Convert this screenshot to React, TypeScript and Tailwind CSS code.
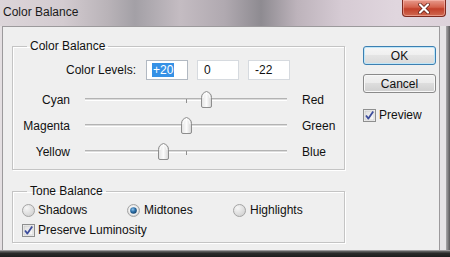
import React from "react";

function Thumb({ left }: { left: number }) {
  return (
    <svg
      className="absolute top-[4px]"
      style={{ left: left - 5.5 }}
      width="11"
      height="17"
      viewBox="0 0 11 17"
    >
      <defs>
        <linearGradient id="tg" x1="0" y1="0" x2="1" y2="0">
          <stop offset="0" stopColor="#e2e2e2" />
          <stop offset="0.5" stopColor="#fbfbfb" />
          <stop offset="1" stopColor="#d4d4d4" />
        </linearGradient>
      </defs>
      <path
        d="M0.5 6.5 Q0.5 2 5.5 0.5 Q10.5 2 10.5 6.5 L10.5 15 Q10.5 16.5 9 16.5 L2 16.5 Q0.5 16.5 0.5 15 Z"
        fill="url(#tg)"
        stroke="#8d8d8d"
      />
      <path d="M2 7 Q2 3 5.5 2 Q9 3 9 7" fill="none" stroke="#ffffff" strokeWidth="0.8" />
    </svg>
  );
}

function SliderRow({ left, right, value }: { left: string; right: string; value: number }) {
  const pos = ((value + 100) / 200) * 202;
  return (
    <div className="flex h-[26px] items-center">
      <div className="w-[57px] text-right leading-[26px]">{left}</div>
      <div className="relative ml-[15px] h-[26px] w-[202px]">
        <div className="absolute left-0 right-0 top-[11px] h-[2px] border-t border-[#b3b3b3] bg-[#dcdcdc] shadow-[0_1px_0_#ffffff]" />
        <div className="absolute left-[101px] top-[12px] h-[4px] w-px bg-[#8f8f8f]" />
        <Thumb left={pos} />
      </div>
      <div className="ml-[15px] leading-[26px]">{right}</div>
    </div>
  );
}

function Radio({ checked }: { checked?: boolean }) {
  return (
    <svg width="13" height="13" viewBox="0 0 13 13" className="shrink-0">
      <defs>
        <radialGradient id="ru" cx="0.35" cy="0.3" r="0.8">
          <stop offset="0" stopColor="#f6f6f6" />
          <stop offset="1" stopColor="#cfcfcf" />
        </radialGradient>
        <radialGradient id="rd" cx="0.4" cy="0.35" r="0.7">
          <stop offset="0" stopColor="#8fc3ea" />
          <stop offset="0.5" stopColor="#2c6fa8" />
          <stop offset="1" stopColor="#123e66" />
        </radialGradient>
      </defs>
      <circle cx="6.5" cy="6.5" r="6" fill="url(#ru)" stroke="#a4a4a4" />
      {checked && (
        <>
          <circle cx="6.5" cy="6.5" r="4.5" fill="#f4f4f4" />
          <circle cx="6.5" cy="6.5" r="3.3" fill="url(#rd)" />
        </>
      )}
    </svg>
  );
}

function Check() {
  return (
    <svg width="13" height="13" viewBox="0 0 13 13" className="shrink-0">
      <defs>
        <linearGradient id="cg" x1="0" y1="0" x2="1" y2="1">
          <stop offset="0" stopColor="#dedede" />
          <stop offset="1" stopColor="#fbfbfb" />
        </linearGradient>
      </defs>
      <rect x="0.5" y="0.5" width="12" height="12" fill="#f4f4f4" stroke="#8e8f8f" />
      <rect x="2" y="2" width="9" height="9" fill="url(#cg)" stroke="#c2c2c2" strokeWidth="0.6" />
      <path d="M3 6.5 L5.4 9.6 L10.2 2.6" fill="none" stroke="#3d4d9c" strokeWidth="1.8" strokeLinejoin="round" />
    </svg>
  );
}

export default function App() {
  return (
    <div className="flex h-[257px] w-[450px] flex-col overflow-hidden font-['Liberation_Sans',Arial,sans-serif] text-[12px] text-[#111111]">
      {/* Title bar */}
      <div className="flex h-[26px] items-start justify-between bg-[linear-gradient(90deg,#dcd5d9_0%,#d3cbd0_14%,#b9b3b8_24%,#a3a0a6_30%,#c4bcc2_40%,#b0a9b0_50%,#8e8b91_58%,#bdb3bb_66%,#d6cbd4_76%,#e0d6de_88%,#ddd2da_100%)]">
        <div className="pl-[3px] pt-[5px] text-[12px] leading-[15px] text-[#1a1a1a]">Color Balance</div>
        <div className="mr-[4px] flex h-[17px] w-[44px] items-center justify-center rounded-b-[4px] border border-t-0 border-[#7e2a1f] bg-[linear-gradient(#e79a8c_0%,#d4624c_45%,#c2402a_55%,#cf6a52_100%)] shadow-[inset_0_0_0_1px_rgba(255,200,190,0.5)]">
          <svg width="12" height="11" viewBox="0 0 12 11">
            <path d="M2 1.5 L10 9.5 M10 1.5 L2 9.5" stroke="#5a1b12" strokeWidth="3.6" strokeLinecap="round" />
            <path d="M2 1.5 L10 9.5 M10 1.5 L2 9.5" stroke="#ffffff" strokeWidth="2.2" strokeLinecap="round" />
          </svg>
        </div>
      </div>

      {/* Middle */}
      <div className="flex flex-1">
        <div className="w-[2px] bg-[#e4dfe2]" />
        <div className="flex flex-1 border-x border-t border-[#9c9a9c] bg-[#efefef] pl-[9px] pt-[12px]">
          {/* Left column */}
          <div className="flex w-[333px] flex-col">
            <fieldset className="border border-[#c4c4c4] pb-[4px] shadow-[1px_1px_0_#ffffff,inset_1px_1px_0_#ffffff]">
              <legend className="ml-[14px] px-[3px] leading-[14px]">Color Balance</legend>
              <div className="mt-[7px] flex h-[20px] items-center">
                <div className="w-[123px] text-right">Color Levels:</div>
                <div className="ml-[10px] flex gap-[9px]">
                  <div className="flex h-[20px] w-[42px] items-center border border-[#b2b9c2] bg-white pl-[5px]">
                    <span className="bg-[#3591e6] px-[1px] leading-[14px] text-white">+20</span>
                  </div>
                  <div className="flex h-[20px] w-[42px] items-center border border-[#d6dadf] bg-white pl-[6px]">0</div>
                  <div className="flex h-[20px] w-[42px] items-center border border-[#d6dadf] bg-white pl-[6px]">-22</div>
                </div>
              </div>
              <div className="mt-[7px] flex flex-col">
                <SliderRow left="Cyan" right="Red" value={20} />
                <SliderRow left="Magenta" right="Green" value={0} />
                <SliderRow left="Yellow" right="Blue" value={-22} />
              </div>
            </fieldset>

            <fieldset className="mt-[14px] border border-[#c4c4c4] pb-[4px] shadow-[1px_1px_0_#ffffff,inset_1px_1px_0_#ffffff]">
              <legend className="ml-[14px] px-[3px] leading-[14px]">Tone Balance</legend>
              <div className="mt-[4px] flex h-[16px] items-center pl-[9px]">
                <div className="flex w-[105px] items-center gap-[3px]">
                  <Radio />
                  <span>Shadows</span>
                </div>
                <div className="flex w-[106px] items-center gap-[4px]">
                  <Radio checked />
                  <span>Midtones</span>
                </div>
                <div className="flex items-center gap-[4px]">
                  <Radio />
                  <span>Highlights</span>
                </div>
              </div>
              <div className="mt-[4px] flex h-[16px] items-center gap-[3px] pl-[9px]">
                <Check />
                <span>Preserve Luminosity</span>
              </div>
            </fieldset>
          </div>

          {/* Right column */}
          <div className="ml-[18px] flex w-[73px] flex-col pt-[7px]">
            <div className="flex h-[19px] items-center justify-center rounded-[3px] border border-[#3c7fb1] bg-[linear-gradient(#f6f6f6_0%,#efefef_50%,#e4e4e4_50%,#dadada_100%)] shadow-[inset_0_0_0_1px_#bfe6f8]">
              OK
            </div>
            <div className="mt-[9px] flex h-[19px] items-center justify-center rounded-[3px] border border-[#8a8a8a] bg-[linear-gradient(#f2f2f2_0%,#ebebeb_50%,#dddddd_50%,#cfcfcf_100%)] shadow-[inset_0_0_0_1px_#f8f8f8]">
              Cancel
            </div>
            <div className="mt-[14px] flex h-[16px] items-center gap-[3px]">
              <Check />
              <span>Preview</span>
            </div>
          </div>
        </div>
        <div className="flex w-[10px]">
          <div className="w-[6px] bg-[#e6e3e5]" />
          <div className="w-[4px] bg-[linear-gradient(90deg,#a9a7a9,#5a585a)]" />
        </div>
      </div>

      {/* Bottom */}
      <div className="h-[7px] border-t border-[#9c9a9c] bg-[linear-gradient(#6a6a6a,#2a2a2a_40%,#1e1e1e)]" />
    </div>
  );
}
